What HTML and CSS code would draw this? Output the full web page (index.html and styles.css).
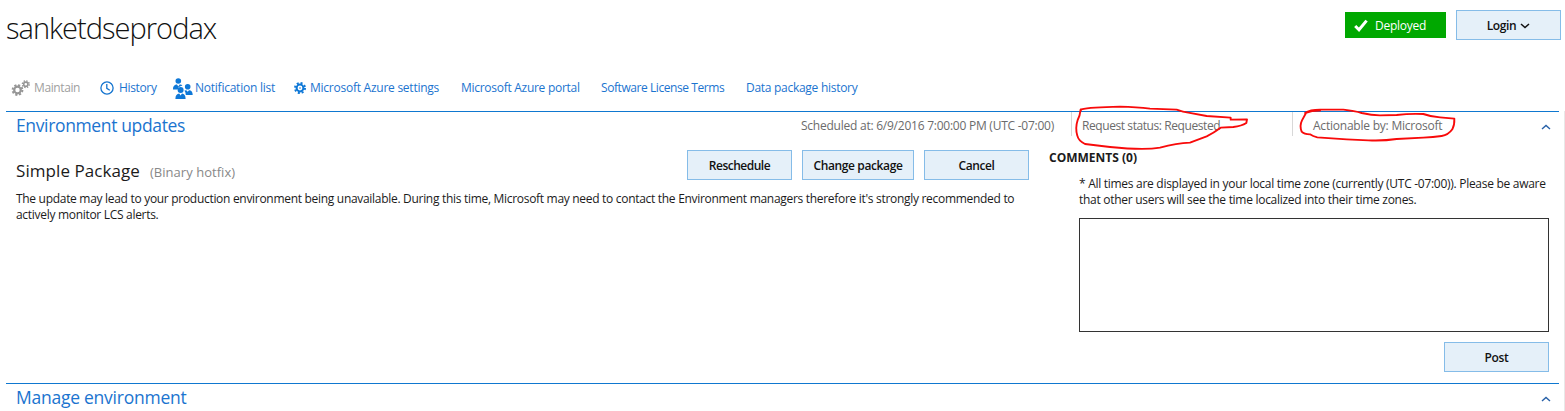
FILE: index.html
```
<!DOCTYPE html>
<html lang="en">
<head>
<meta charset="utf-8">
<title>sanketdseprodax</title>
<link rel="stylesheet" href="styles.css">
</head>
<body>
<header class="top">
  <h1 class="title">sanketdseprodax</h1>
  <div class="status">
    <svg class="check" viewBox="0 0 14 13"><path d="M1.2 7 5 10.8 12.6 1.6" fill="none" stroke="#fff" stroke-width="3"/></svg>
    <span class="label">Deployed</span>
  </div>
  <button class="btn login"><span>Login</span>
    <svg class="chev" viewBox="0 0 10 6"><path d="M1 1l4 3.6L9 1" fill="none" stroke="#111" stroke-width="1.5"/></svg>
  </button>
</header>
<nav class="tools">
  <a class="tool maintain">
    <svg class="gears" viewBox="0 0 19 17"><g fill="none" stroke="#969696"><circle cx="6.5" cy="10" r="3.3" stroke-width="2.2"/><circle cx="6.5" cy="10" r="4.9" stroke-width="2" stroke-dasharray="2.1 1.748"/><circle cx="14.8" cy="4.2" r="2.1" stroke-width="1.6"/><circle cx="14.8" cy="4.2" r="3.4" stroke-width="1.4" stroke-dasharray="1.45 1.22"/></g></svg>
    <span>Maintain</span></a>
  <a class="tool history">
    <svg class="clock" viewBox="0 0 14 14"><circle cx="7" cy="7" r="6.1" fill="none" stroke="#1474cf" stroke-width="1.3"/><path d="M6.8 3v4.4l3 1.9" fill="none" stroke="#1474cf" stroke-width="1.3"/></svg>
    <span>History</span></a>
  <a class="tool notify">
    <svg class="people" viewBox="0 0 20 21"><g fill="#0f78d7"><circle cx="5.300" cy="3" r="2.800"/><path d="M0 11.400C0 8 2 6.600 4 6.600L5.300 8.400 6.600 6.600C8 6.600 9 7 9.400 7.600Q5 8.800 4.800 11.400Z"/><circle cx="14.700" cy="8.800" r="2.800"/><path d="M11.400 12.600 13.300 12.200 14.700 13.800 16 12.200C18.500 12.200 19.700 14 19.700 17H12.800Q12.700 14.300 11.400 12.600Z"/><circle cx="7.600" cy="12" r="3"/><path d="M2.400 21C2.400 17.500 4 15.700 6.200 15.600L7.600 17.500 9 15.600C11.300 15.700 12.600 17.500 12.600 21Z"/></g></svg>
    <span>Notification list</span></a>
  <a class="tool settings">
    <svg class="gear" viewBox="0 0 12 12"><g fill="none" stroke="#0f78d7"><circle cx="6" cy="6" r="3.400" stroke-width="2"/><circle cx="6" cy="6" r="5" stroke-width="2" stroke-dasharray="2 1.927"/></g><circle cx="6" cy="6" r=".8" fill="#0f78d7"/></svg>
    <span>Microsoft Azure settings</span></a>
  <a class="tool portal"><span>Microsoft Azure portal</span></a>
  <a class="tool license"><span>Software License Terms</span></a>
  <a class="tool data"><span>Data package history</span></a>
</nav>
<main class="panels">
  <section class="panel updates">
    <div class="head">
      <h2 class="h2">Environment updates</h2>
      <div class="meta sched">Scheduled at: 6/9/2016 7:00:00 PM (UTC -07:00)</div>
      <div class="meta req">Request status: Requested</div>
      <div class="meta act">Actionable by: Microsoft</div>
      <svg class="up" viewBox="0 0 10 6"><path d="M1 5l4-3.600L9 5" fill="none" stroke="#2861a8" stroke-width="1.400"/></svg>
    </div>
    <div class="body">
      <div class="package">
        <div class="prow">
          <h3 class="h3">Simple Package</h3>
          <span class="kind">(Binary hotfix)</span>
          <div class="actions">
            <button class="btn resched">Reschedule</button>
            <button class="btn wide">Change package</button>
            <button class="btn">Cancel</button>
          </div>
        </div>
        <p class="note">The update may lead to your production environment being unavailable. During this time, Microsoft may need to contact the Environment managers therefore it's strongly recommended to<br>actively monitor LCS alerts.</p>
      </div>
      <div class="comments">
        <h4 class="h4">COMMENTS (0)</h4>
        <p class="zone">* All times are displayed in your local time zone (currently (UTC -07:00)). Please be aware<br>that other users will see the time localized into their time zones.</p>
        <textarea class="box"></textarea>
        <button class="btn post">Post</button>
      </div>
    </div>
  </section>
  <section class="panel">
    <div class="head">
      <h2 class="h2 manage">Manage environment</h2>
      <svg class="up" viewBox="0 0 10 6"><path d="M1 5l4-3.600L9 5" fill="none" stroke="#2861a8" stroke-width="1.400"/></svg>
    </div>
  </section>
</main>
<svg class="ink" viewBox="0 0 1565 411">
  <g fill="none" stroke="#f80a0a" stroke-width="5.6" stroke-linejoin="round" stroke-linecap="round">
    <path transform="translate(1060 95) scale(.33333)" d="M62 48 64 43Q90 37 180 35Q230 36 270 41L350 44Q370 51 385 53L440 63 512 68 512 74 561 73 559 84Q545 93 520 96L482 98Q460 114 440 124L390 143Q350 145 300 158Q250 166 150 156L75 147Q55 137 52 122Q45 100 53 75Q60 62 62 43"/>
    <path transform="translate(1280 95) scale(.33333)" d="M120 47Q95 47 75 54Q90 44 120 44L190 44Q225 48 245 54Q275 61 300 61L350 60Q390 55 430 57Q455 66 480 67L523 71Q524 90 517 103Q505 120 485 123Q460 127 430 128L350 132Q310 138 265 136L200 133 112 127Q98 124 90 118Q72 118 65 110Q58 92 66 76L78 54"/>
  </g>
</svg>
</body>
</html>
```
FILE: styles.css
```
* { box-sizing: border-box; }
body { margin: 0; width: 1565px; height: 411px; overflow: hidden; background: #fff; color: #1b1b1b; font: 12px/16px "Open Sans", "Noto Sans", sans-serif; position: relative; white-space: nowrap; }
h1, h2, h3, h4, p { margin: 0; font-weight: 400; }
svg { flex: none; display: block; }
.top { display: flex; height: 70px; padding: 10px 4px 0 6px; align-items: flex-start; }
.title { flex: 1; font-size: 29px; line-height: 35px; font-weight: 300; letter-spacing: -.98px; color: #111; }
.status { display: flex; align-items: center; width: 101px; height: 26px; margin: 2px 10px 0 0; padding-left: 9px; background: #00a800; color: #fff; letter-spacing: -.25px; }
.label { padding-top: 2px; }
.check { width: 14px; height: 13px; margin-right: 7px; }
.btn { display: flex; align-items: center; justify-content: center; width: 105px; height: 30px; padding: 2px 0 0; border: 1px solid #85bce8; background: #e5f0f9; color: #111; font: 600 12px/16px "Open Sans", sans-serif; letter-spacing: -.38px; }
.resched { letter-spacing: -.5px; }
.wide { width: 112px; }
.chev { width: 10px; height: 6px; margin-left: 4px; }
.tools { display: flex; height: 41px; padding-left: 11px; color: #1b74cf; letter-spacing: -.25px; }
.tool { display: flex; align-items: center; height: 36px; flex: none; }
.maintain { color: #a0a0a0; width: 89px; letter-spacing: -.4px; }
.gears { width: 19px; height: 17px; margin-right: 4px; }
.history { width: 73px; letter-spacing: -.35px; }
.clock { width: 14px; height: 14px; margin-right: 5px; }
.notify { width: 121px; letter-spacing: -.24px; }
.people { width: 20px; height: 21px; margin-right: 2px; }
.settings { width: 167px; }
.gear { width: 12px; height: 12px; margin-right: 4px; }
.portal { width: 140px; letter-spacing: -.28px; }
.license { width: 145px; letter-spacing: -.43px; }
.data { letter-spacing: -.28px; }
.panels { height: 300px; padding: 0 5px 0 6px; border-right: 1px solid #e8e8e8; }
.panel { border-top: 1px solid #0f78d0; }
.updates { height: 272px; }
.head { display: flex; height: 31px; padding-left: 10px; }
.h2 { flex: 1; font-size: 17.5px; line-height: 27px; letter-spacing: -.36px; color: #1b74cf; }
.manage { letter-spacing: -.25px; }
.meta { height: 24px; line-height: 28px; color: #6b6b6b; }
.sched { width: 270px; letter-spacing: -.24px; }
.req { width: 221px; padding-left: 10px; border-left: 1px solid #d8d8d8; letter-spacing: -.42px; }
.act { width: 249px; padding-left: 20px; border-left: 1px solid #d8d8d8; letter-spacing: -.22px; }
.up { width: 10px; height: 6px; margin: 12px 8px 0 0; }
.body { display: flex; }
.package { width: 1023px; padding: 7px 0 0 10px; }
.prow { display: flex; height: 30px; }
.h3 { font-size: 17px; line-height: 41px; width: 134px; letter-spacing: .07px; }
.kind { font-size: 13px; line-height: 45px; color: #888; letter-spacing: .03px; }
.actions { display: flex; gap: 10px; margin-left: auto; }
.note { margin-top: 11px; letter-spacing: -.3px; }
.comments { width: 530px; padding-left: 20px; }
.h4 { font-weight: 700; margin-top: 7px; }
.zone { margin: 10px 0 0 30px; letter-spacing: -.285px; }
.box { display: block; width: 470px; height: 114px; margin: 10px 0 10px 30px; border: 1px solid #333; resize: none; }
.post { margin-left: 395px; }
.ink { position: absolute; left: 0; top: 0; width: 1565px; height: 411px; pointer-events: none; }
```
